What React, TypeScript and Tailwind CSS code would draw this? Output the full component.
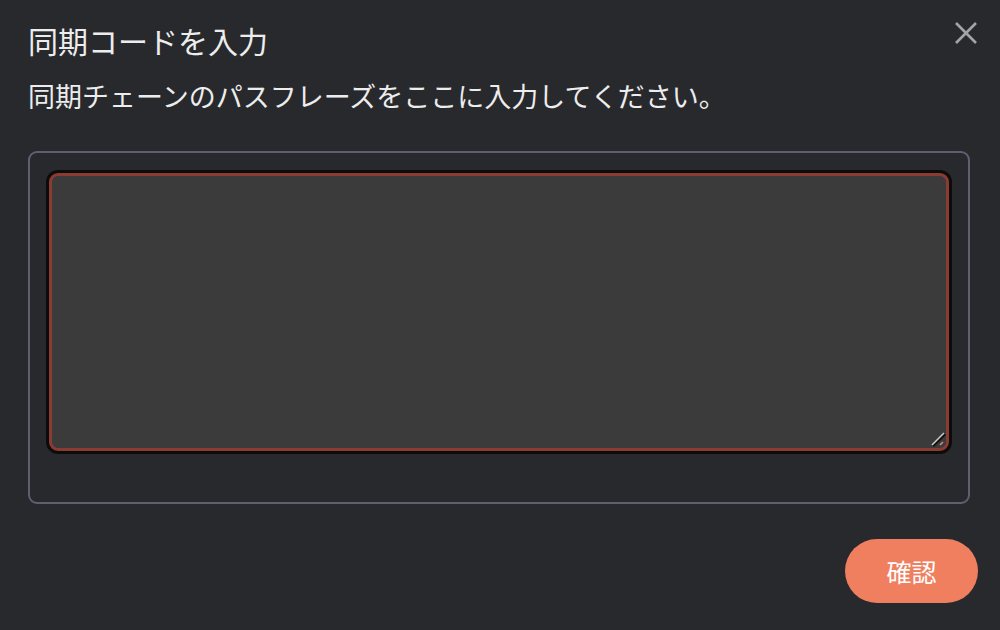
export default function App() {
  const font = { fontFamily: '"Noto Sans CJK JP", "Noto Sans", sans-serif' };
  return (
    <div className="w-[1000px] h-[630px] bg-[#28292d] text-[#ececec] overflow-hidden" style={font}>
      {/* Header */}
      <div className="flex items-start justify-between pl-[28px] pr-[22px]">
        <h1 className="mt-[22px] text-[30px] leading-[36px] font-normal text-[#ededed]">同期コードを入力</h1>
        <button className="mt-[21px] w-[24px] h-[24px] text-[#a3a4a8]" aria-label="閉じる">
          <svg viewBox="0 0 24 24" width="24" height="24" fill="none" stroke="currentColor" strokeWidth="2.6">
            <path d="M2 2 L22 22 M22 2 L2 22" />
          </svg>
        </button>
      </div>
      <p className="pl-[28px] mt-[21px] text-[27px] leading-[34px] text-[#ededed]">
        同期チェーンのパスフレーズをここに入力してください。
      </p>

      {/* Input box */}
      <div className="ml-[28px] mt-[38px] w-[942px] h-[353px] border-2 border-[#5d6070] rounded-[9px] pt-[20px] px-[19px]">
        <div className="relative">
          <textarea
            className="block w-full h-[278px] bg-[#3b3b3b] border-[3px] border-[#8a3b32] rounded-[9px] shadow-[0_0_0_3px_#0c0c0c] outline-none text-[#ececec] p-2 resize-none"
          />
          {/* resize grip */}
          <svg className="absolute right-[3px] bottom-[3px] pointer-events-none" width="16" height="16" viewBox="0 0 16 16">
            <path d="M3 14 L15 2" stroke="#111" strokeWidth="2.5" />
            <path d="M2 13 L14 1" stroke="#c9c9c9" strokeWidth="1.6" />
            <path d="M10 13 L13 10" stroke="#c98a84" strokeWidth="1.6" />
          </svg>
        </div>
      </div>

      {/* Footer */}
      <div className="flex justify-end pr-[22px] mt-[35px]">
        <button className="w-[133px] h-[64px] rounded-full bg-[#ef7f5f] text-white text-[25px] leading-none">
          確認
        </button>
      </div>
    </div>
  );
}
